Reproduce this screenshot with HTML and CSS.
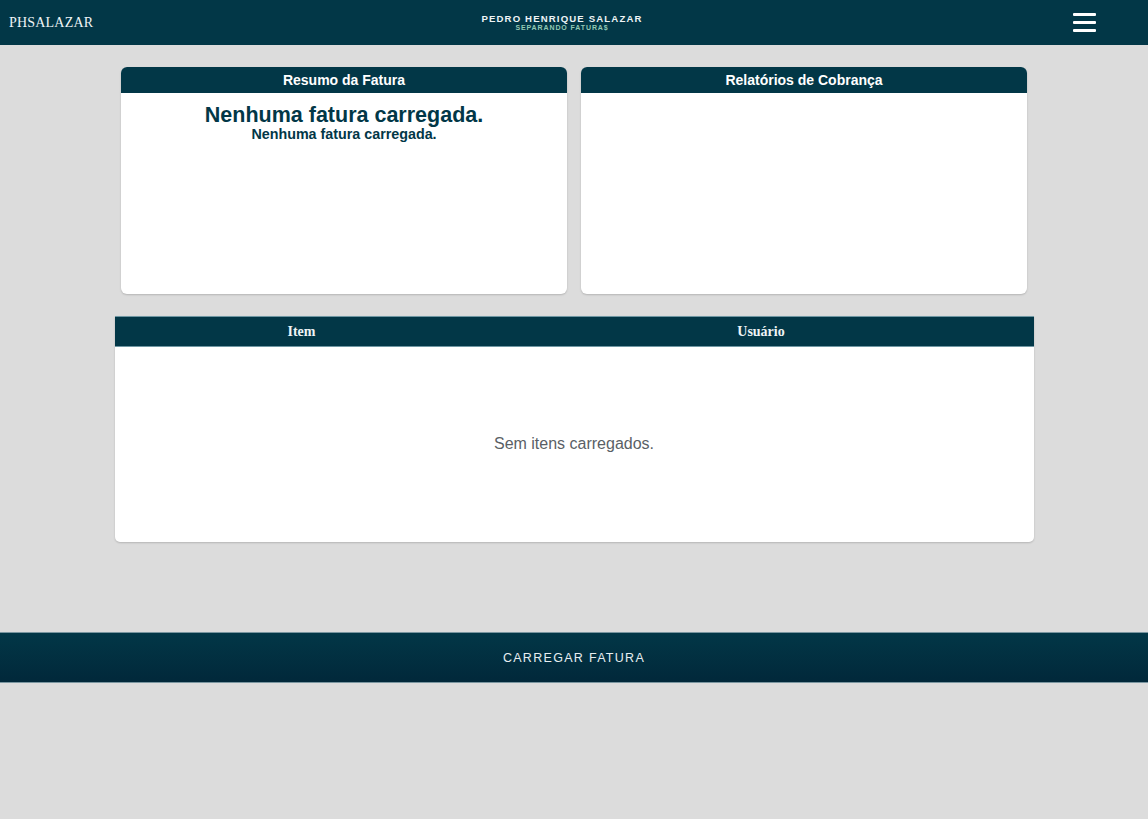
FILE: index.html
```html
<!DOCTYPE html>
<html lang="pt-BR">
<head>
<meta charset="utf-8">
<title>PHSALAZAR</title>
<link rel="stylesheet" href="styles.css">
</head>
<body>
<header class="topbar">
  <div class="brand">PHSALAZAR</div>
  <div class="title">
    <div class="title-main">PEDRO HENRIQUE SALAZAR</div>
    <div class="title-sub">SEPARANDO FATURA$</div>
  </div>
  <button class="menu" aria-label="Menu">
    <span></span><span></span><span></span>
  </button>
</header>

<main class="content">
  <section class="cards">
    <div class="card">
      <div class="card-head">Resumo da Fatura</div>
      <div class="card-body">
        <div class="empty-big">Nenhuma fatura carregada.</div>
        <div class="empty-small">Nenhuma fatura carregada.</div>
      </div>
    </div>
    <div class="card">
      <div class="card-head">Relatórios de Cobrança</div>
      <div class="card-body"></div>
    </div>
  </section>

  <section class="table">
    <div class="table-head">
      <div class="th">Item</div>
      <div class="th">Usuário</div>
    </div>
    <div class="table-body">Sem itens carregados.</div>
  </section>
</main>

<div class="load-bar">CARREGAR FATURA</div>
</body>
</html>
```

FILE: styles.css
```css
* { box-sizing: border-box; }
html, body { margin: 0; padding: 0; }
body {
  background: #dcdcdc;
  font-family: "Liberation Sans", Arial, sans-serif;
  min-height: 819px;
}

.topbar {
  height: 45px;
  background: #023747;
  display: flex;
  align-items: center;
  justify-content: space-between;
  padding: 0 52px 0 9px;
  position: relative;
}
.brand {
  font-family: "Liberation Serif", "Times New Roman", serif;
  color: #eef4f6;
  font-size: 14px;
  letter-spacing: 0.2px;
}
.title {
  position: absolute;
  left: 0; right: 24px;
  top: 13px;
  text-align: center;
  pointer-events: none;
}
.title-main {
  color: #eef4f6;
  font-weight: bold;
  font-size: 9.6px;
  letter-spacing: 1.15px;
  line-height: 11px;
}
.title-sub {
  color: #93c9b4;
  font-weight: bold;
  font-size: 7px;
  letter-spacing: 0.9px;
  line-height: 8px;
}
.menu {
  background: none;
  border: 0;
  padding: 0;
  width: 23px;
  height: 19px;
  display: flex;
  flex-direction: column;
  justify-content: space-between;
  cursor: pointer;
}
.menu span {
  display: block;
  height: 3px;
  background: #fff;
  border-radius: 1px;
}

.content {
  padding-top: 22px;
  display: flex;
  flex-direction: column;
  align-items: center;
}
.cards {
  display: flex;
  gap: 14px;
  width: 906px;
}
.card {
  flex: 1;
  height: 227px;
  background: #fff;
  border-radius: 6px;
  box-shadow: 0 1px 2px rgba(0,0,0,0.18);
  overflow: hidden;
  display: flex;
  flex-direction: column;
}
.card-head {
  height: 26px;
  background: #023747;
  color: #fff;
  font-weight: bold;
  font-size: 14px;
  text-align: center;
  line-height: 26px;
}
.card-body {
  flex: 1;
  text-align: center;
  color: #023747;
  font-weight: bold;
  padding-top: 10px;
}
.empty-big { font-size: 21.5px; line-height: 24px; }
.empty-small { font-size: 14.3px; line-height: 14px; }

.table {
  margin-top: 22px;
  width: 919px;
  background: #fff;
  border-radius: 0 0 5px 5px;
  box-shadow: 0 1px 2px rgba(0,0,0,0.18);
  overflow: hidden;
}
.table-head {
  display: grid;
  grid-template-columns: 374px 1fr;
  height: 31px;
  background: #023747;
  border-top: 1px solid #6f97a3;
  border-bottom: 1px solid #6f97a3;
}
.th {
  font-family: "Liberation Serif", "Times New Roman", serif;
  font-weight: bold;
  font-size: 14px;
  color: #eef4f6;
  text-align: center;
  line-height: 29px;
}
.table-body {
  height: 195px;
  display: flex;
  align-items: center;
  justify-content: center;
  color: #5a5f66;
  font-size: 16px;
  padding-bottom: 2px;
}

.load-bar {
  margin-top: 90px;
  height: 51px;
  background: linear-gradient(#023747, #01283a);
  border-top: 1px solid #7a96a0;
  border-bottom: 1px solid #7a96a0;
  color: #e6eef1;
  font-size: 12.5px;
  letter-spacing: 1.3px;
  display: flex;
  align-items: center;
  justify-content: center;
}
```
